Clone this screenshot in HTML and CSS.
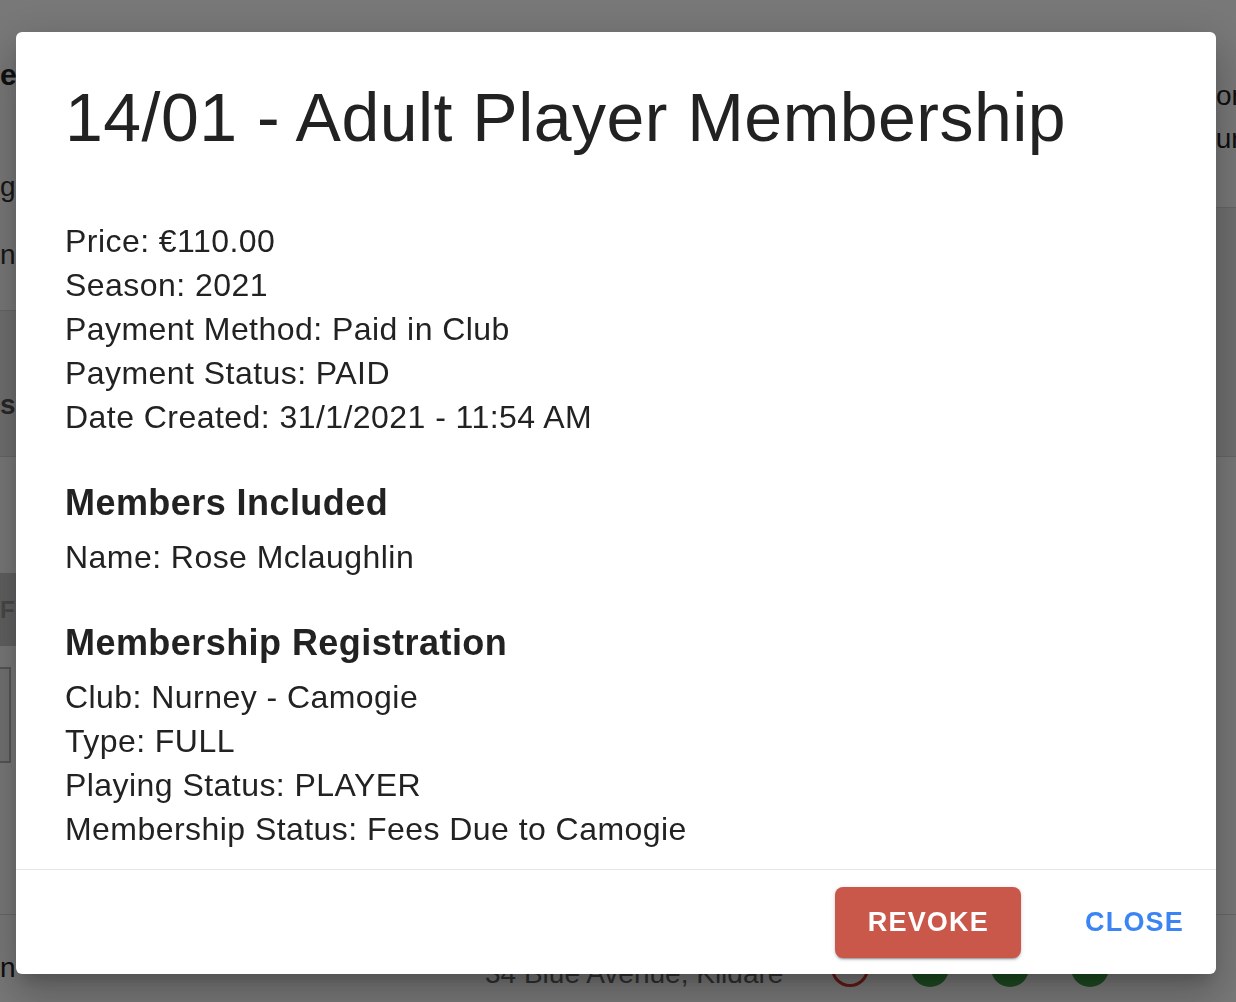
FILE: index.html
```html
<!DOCTYPE html>
<html lang="en">
<head>
<meta charset="utf-8">
<title>14/01 - Adult Player Membership</title>
<link rel="stylesheet" href="styles.css">
</head>
<body>
<div class="page">
  <div class="page-top">
    <div class="col-left">
      <div class="lrow lrow-a">
        <div class="pg-title">ew</div>
        <div class="pg-line pg-line-g">gi</div>
        <div class="pg-line pg-line-n">n</div>
      </div>
      <div class="lrow lrow-b"><div class="pg-strong">s</div></div>
      <div class="lrow lrow-c"></div>
      <div class="lrow lrow-d"><span class="pg-filter">F</span></div>
      <div class="lrow lrow-e"><div class="pg-input"></div></div>
    </div>
    <div class="col-mid"></div>
    <div class="col-right">
      <div class="rrow rrow-a">
        <div class="r-line r-line-1">Color</div>
        <div class="r-line r-line-2">Hours</div>
      </div>
      <div class="rrow rrow-b"></div>
      <div class="rrow rrow-c"></div>
    </div>
  </div>
  <div class="page-bottom">
    <span class="pb-name">n</span>
    <span class="pb-addr">34 Blue Avenue, Kildare</span>
    <span class="dot dot-red"></span>
    <span class="dot dot-green"></span>
    <span class="dot dot-green"></span>
    <span class="dot dot-green"></span>
  </div>
</div>

<div class="backdrop">
  <div class="dialog" role="dialog">
    <h2 class="dlg-title">14/01 - Adult Player Membership</h2>
    <div class="dlg-content">
      <p class="line">Price: €110.00</p>
      <p class="line">Season: 2021</p>
      <p class="line">Payment Method: Paid in Club</p>
      <p class="line">Payment Status: PAID</p>
      <p class="line">Date Created: 31/1/2021 - 11:54 AM</p>

      <h3 class="section-title">Members Included</h3>
      <p class="line">Name: Rose Mclaughlin</p>

      <h3 class="section-title">Membership Registration</h3>
      <p class="line">Club: Nurney - Camogie</p>
      <p class="line">Type: FULL</p>
      <p class="line">Playing Status: PLAYER</p>
      <p class="line">Membership Status: Fees Due to Camogie</p>
    </div>
    <div class="dlg-actions">
      <button class="btn btn-revoke" type="button">REVOKE</button>
      <button class="btn btn-close" type="button">CLOSE</button>
    </div>
  </div>
</div>
</body>
</html>
```

FILE: styles.css
```css
* { box-sizing: border-box; }

body {
  margin: 0;
  font-family: "Liberation Sans", Arial, Helvetica, sans-serif;
}

/* ---------- background page (dimmed) ---------- */
.page {
  width: 1236px;
  height: 1002px;
  overflow: hidden;
  display: flex;
  flex-direction: column;
  background: #ffffff;
  color: #333333;
}

.page-top {
  height: 915px;
  display: flex;
}

.col-left {
  width: 440px;
  display: flex;
  flex-direction: column;
}

.lrow { flex: none; white-space: nowrap; overflow: hidden; }

.lrow-a { height: 310px; padding-top: 57px; }

.pg-title,
.pg-line,
.pg-strong,
.pg-filter {
  display: block;
  width: 16px;
  overflow: hidden;
}

.pg-title {
  font-size: 30px;
  line-height: 36px;
  font-weight: 700;
  color: #222;
}

.pg-line {
  font-size: 28px;
  line-height: 36px;
  color: #333;
}

.pg-line-g { margin-top: 76px; }
.pg-line-n { margin-top: 32px; }

.lrow-b {
  height: 147px;
  background: #ececec;
  border-top: 1px solid #d8d8d8;
  border-bottom: 1px solid #d8d8d8;
  padding-top: 76px;
}

.pg-strong {
  font-size: 28px;
  line-height: 36px;
  font-weight: 700;
  color: #555;
}

.lrow-c { height: 116px; }

.lrow-d {
  height: 73px;
  background: #cdcdcd;
  display: flex;
  align-items: center;
}

.pg-filter {
  font-size: 24px;
  font-weight: 700;
  color: #9a9a9a;
  letter-spacing: 2px;
}

.lrow-e {
  flex: 1;
  padding-top: 21px;
  border-bottom: 1px solid #dddddd;
}

.pg-input {
  width: 11px;
  height: 96px;
  border: 2px solid #b5b5b5;
  border-left: none;
  background: #f2f2f2;
}

.col-mid { flex: 1; }

.col-right {
  width: 236px;
  display: flex;
  flex-direction: column;
}

.rrow { flex: none; white-space: nowrap; overflow: hidden; }

.rrow-a { height: 207px; padding-top: 74px; }

.r-line {
  font-size: 28px;
  line-height: 43px;
  color: #222;
}

.r-line-1 { padding-left: 174px; }
.r-line-2 { padding-left: 180px; }

.rrow-b {
  height: 250px;
  background: #ededed;
  border-top: 1px solid #d8d8d8;
  border-bottom: 1px solid #d8d8d8;
}

.rrow-c {
  flex: 1;
  border-bottom: 1px solid #dddddd;
}

.page-bottom {
  flex: 1;
  display: flex;
  align-items: flex-start;
  padding-top: 34px;
  white-space: nowrap;
}

.pb-name {
  width: 485px;
  font-size: 28px;
  line-height: 38px;
  color: #222;
  overflow: hidden;
}

.pb-addr {
  font-size: 28px;
  line-height: 38px;
  margin-top: 6px;
  color: #666;
  width: 308px;
  overflow: hidden;
}

.dot {
  width: 38px;
  height: 38px;
  border-radius: 50%;
  margin-left: 42px;
  flex: none;
}

.dot-red {
  margin-left: 38px;
  border: 3px solid #d0372d;
}

.dot-green { background: #3f9e45; }

/* ---------- modal ---------- */
.backdrop {
  position: fixed;
  inset: 0;
  background: rgba(0, 0, 0, 0.53);
  display: flex;
  padding: 32px 20px 28px 16px;
}

.dialog {
  flex: 1;
  display: flex;
  flex-direction: column;
  background: #ffffff;
  border-radius: 6px;
  overflow: hidden;
  color: #222222;
  box-shadow: 0 11px 15px -7px rgba(0,0,0,0.2),
              0 24px 38px 3px rgba(0,0,0,0.14),
              0 9px 46px 8px rgba(0,0,0,0.12);
}

.dlg-title {
  margin: 0;
  padding: 45px 47px 0 49px;
  font-size: 68px;
  line-height: 80px;
  font-weight: 400;
  letter-spacing: 0.47px;
}

.dlg-content {
  flex: 1;
  padding: 62px 47px 0 49px;
  font-size: 32px;
  line-height: 44px;
  letter-spacing: 0.45px;
}

.line { margin: 0; }

.section-title {
  margin: 40px 0 8px;
  font-size: 36px;
  line-height: 48px;
  font-weight: 700;
  letter-spacing: 0.44px;
}

.dlg-actions {
  flex: none;
  height: 104px;
  box-sizing: content-box;
  border-top: 1px solid #e6e6e6;
  display: flex;
  align-items: center;
  justify-content: flex-end;
  gap: 48px;
  padding-right: 16px;
}

.btn {
  font-family: "Liberation Sans", Arial, Helvetica, sans-serif;
  font-size: 27px;
  font-weight: 700;
  letter-spacing: 1.2px;
  height: 71px;
  border: none;
  cursor: pointer;
  background: transparent;
}

.btn-revoke {
  background: #c9584a;
  color: #ffffff;
  padding: 0 32px 0 33px;
  border-radius: 8px;
  box-shadow: 0 3px 1px -2px rgba(0,0,0,0.2),
              0 2px 2px 0 rgba(0,0,0,0.14),
              0 1px 5px 0 rgba(0,0,0,0.12);
}

.btn-close {
  color: #3b84f4;
  padding: 0 16px;
}
```
